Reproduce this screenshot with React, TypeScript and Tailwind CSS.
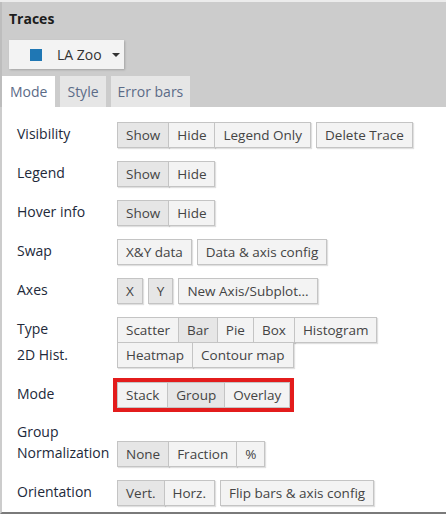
import type { ReactNode } from 'react'

type Opt = { label: string; active?: boolean }

const font = { fontFamily: '"Open Sans", "Noto Sans", sans-serif' }

const Group = ({ options, className = '' }: { options: Opt[]; className?: string }) => (
  <div className={`flex ${className}`}>
    {options.map((o, i) => (
      <div
        key={o.label}
        className={`flex h-[26px] items-center border border-[#c4c4c4] px-[8px] text-[13.5px] text-[#444] shadow-[1px_1px_1px_rgba(0,0,0,0.12)] ${
          i > 0 ? '-ml-px' : ''
        } ${o.active ? 'bg-[#e6e6e6]' : 'bg-[#f3f3f3]'}`}
      >
        {o.label}
      </div>
    ))}
  </div>
)

const Row = ({ label, children }: { label: string; children: ReactNode }) => (
  <div className="flex items-start">
    <div className="flex h-[26px] w-[100px] shrink-0 items-center pb-[4px] text-[14px] text-[#22293a]">{label}</div>
    <div className="flex flex-wrap gap-[5px]">{children}</div>
  </div>
)

export default function App() {
  return (
    <div className="h-[516px] w-[446px] overflow-hidden bg-white" style={font}>
      <div className="h-[2px] bg-[#ececec]" />
      <div className="h-[105px] border-l-2 border-[#bdbdbd] bg-[#cccccc]">
        <div className="px-[7px] pt-[7px] text-[14px] font-bold leading-[20px] text-[#1c1c1c]">Traces</div>
        <div className="ml-[7px] mt-[11px] flex h-[29px] w-[115px] items-center bg-[#f3f3f3] pl-[21px] shadow-[1px_1px_2px_rgba(0,0,0,0.2)]">
          <div className="h-[12px] w-[12px] bg-[#1f77b4]" />
          <span className="ml-[15px] text-[14px] text-[#333]">LA Zoo</span>
          <span className="ml-[10px] h-0 w-0 border-x-[4px] border-t-[4px] border-x-transparent border-t-[#333]" />
        </div>
        <div className="mt-[7px] flex gap-[5px]">
          <div className="flex h-[31px] items-center bg-white px-[8px] text-[14px] text-[#5b6b87]">Mode</div>
          <div className="flex h-[31px] items-center bg-[#e6e6e6] px-[7px] text-[14px] text-[#5b6b87]">Style</div>
          <div className="flex h-[31px] items-center bg-[#e6e6e6] px-[7px] text-[14px] text-[#5b6b87]">Error bars</div>
        </div>
      </div>
      <div className="flex h-[407px] flex-col gap-[13px] border-b-2 border-l-2 border-b-[#7a7a7a] border-l-[#cccccc] pl-[15px] pt-[15px]">
        <Row label="Visibility">
          <Group options={[{ label: 'Show', active: true }, { label: 'Hide' }, { label: 'Legend Only' }]} />
          <Group options={[{ label: 'Delete Trace' }]} />
        </Row>
        <Row label="Legend">
          <Group options={[{ label: 'Show', active: true }, { label: 'Hide' }]} />
        </Row>
        <Row label="Hover info">
          <Group options={[{ label: 'Show', active: true }, { label: 'Hide' }]} />
        </Row>
        <Row label="Swap">
          <Group options={[{ label: 'X&Y data' }]} />
          <Group options={[{ label: 'Data & axis config' }]} />
        </Row>
        <Row label="Axes">
          <Group options={[{ label: 'X', active: true }]} />
          <Group options={[{ label: 'Y', active: true }]} />
          <Group options={[{ label: 'New Axis/Subplot...' }]} />
        </Row>
        <div className="flex items-start">
          <div className="w-[100px] shrink-0 text-[14px] text-[#22293a]">
            <div className="flex h-[26px] items-center pb-[4px]">Type</div>
            <div className="flex h-[26px] items-center pb-[4px]">2D Hist.</div>
          </div>
          <div className="flex flex-col">
            <Group
              options={[
                { label: 'Scatter' },
                { label: 'Bar', active: true },
                { label: 'Pie' },
                { label: 'Box' },
                { label: 'Histogram' },
              ]}
            />
            <Group className="-mt-px" options={[{ label: 'Heatmap' }, { label: 'Contour map' }]} />
          </div>
        </div>
        <Row label="Mode">
          <Group
            className="outline-[4px] outline-[#e31c1c] outline-solid"
            options={[{ label: 'Stack' }, { label: 'Group', active: true }, { label: 'Overlay' }]}
          />
        </Row>
        <div className="flex items-start">
          <div className="w-[100px] shrink-0 text-[14px] leading-[21px] text-[#22293a]">
            <div>Group</div>
            <div>Normalization</div>
          </div>
          <Group
            className="mt-[20px]"
            options={[{ label: 'None', active: true }, { label: 'Fraction' }, { label: '%' }]}
          />
        </div>
        <Row label="Orientation">
          <Group options={[{ label: 'Vert.', active: true }, { label: 'Horz.' }]} />
          <Group options={[{ label: 'Flip bars & axis config' }]} />
        </Row>
      </div>
    </div>
  )
}
